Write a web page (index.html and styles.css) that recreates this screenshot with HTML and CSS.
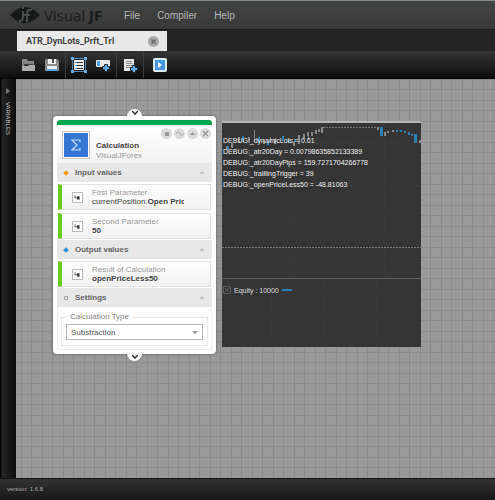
FILE: index.html
```html
<!DOCTYPE html>
<html lang="en">
<head>
<meta charset="utf-8">
<title>Visual JF</title>
<link rel="stylesheet" href="styles.css">
</head>
<body>
<header class="topbar">
  <a class="brand" href="#">
    <svg width="30" height="16" viewBox="0 0 30 16" aria-hidden="true"><path fill="#181a19" d="M0 8C5 3 10 0 15 0s10 3 15 8c-5 5-10 8-15 8S5 13 0 8z"/><path fill="none" stroke="#4b4d4c" stroke-width="2" d="M9 14c3 0 4-2 4-4V4M17 15V7c0-3 1-5 5-4M14 8h6"/><path fill="#4b4d4c" d="M12 0h2v2h-2z"/></svg>
    <span class="brand-name">Visual <b>JF</b></span>
  </a>
  <nav class="menu"><a href="#">File</a><a href="#">Compiler</a><a href="#">Help</a></nav>
</header>
<div class="tabs">
  <div class="tab"><span>ATR_DynLots_Prft_Trl</span>
    <button class="tab-close" aria-label="Close tab"><svg width="11" height="11" viewBox="0 0 11 11"><circle cx="5.500" cy="5.500" r="5.500" fill="#aaa"/><path stroke="#666" stroke-width="1.500" d="M3.500 3.500l4 4M7.500 3.500l-4 4"/></svg></button>
  </div>
</div>
<div class="toolbar">
  <div class="tools tools-file">
    <button aria-label="Open"><svg width="16" height="16" viewBox="0 0 16 16"><path fill="#858585" d="M2 2h5l1 2h6v4H5l-3 2z"/><path fill="#aaa" d="M2 9h6l1-1h6v6H2z"/><path stroke="#444" d="M4 7.500h9"/></svg></button>
    <button aria-label="Save"><svg width="16" height="16" viewBox="0 0 16 16"><path fill="#8b8b8b" d="M2 2h11l2 2v10H1V3z"/><path fill="#eee" d="M4 2h8v5H4zM3 9h10v5H3z"/><path fill="#555" d="M8 2h2v4H8z"/><path fill="#58a9e6" d="M3 12h10v2H3z"/></svg></button>
  </div>
  <div class="tools">
    <button aria-label="Select block"><svg width="16" height="16" viewBox="0 0 16 16"><path fill="none" stroke="#5587ae" d="M1.500 1.500h13v13h-13z"/><path fill="#71a9d8" d="M0 0h3v3H0zM13 0h3v3h-3zM0 13h3v3H0zM13 13h3v3h-3z"/><rect x="3" y="3" width="10" height="10" rx="1" fill="#eee"/><path stroke="#333" d="M6 5.500h6M6 8.500h6M6 11.500h6"/><path stroke="#4a9ad6" d="M4 5.500h2M4 8.500h2M4 11.500h2"/></svg></button>
    <button aria-label="Add variable"><svg width="16" height="16" viewBox="0 0 16 16"><rect x="1" y="3" width="14" height="7" rx="1" fill="#e8e8e8"/><path fill="#529fdc" d="M2 4h3v5H2z"/><path fill="#62b0ef" stroke="#222" d="M9.500 7.500h3v2h2v3h-2v2h-3v-2h-2v-3h2z"/></svg></button>
  </div>
  <div class="tools tools-single">
    <button aria-label="Add document"><svg width="16" height="16" viewBox="0 0 16 16"><path fill="#e5e5e5" d="M2 2h10v12H2z"/><path stroke="#888" d="M4 4.500h6M4 6.500h6M4 8.500h6M4 10.500h4"/><path fill="#62b0ef" stroke="#222" d="M10.500 8.500h3v2h2v3h-2v2h-3v-2h-2v-3h2z"/></svg></button>
  </div>
  <div class="tools tools-single">
    <button aria-label="Run"><svg width="16" height="16" viewBox="0 0 16 16"><rect x="2" y="2" width="12" height="12" rx="1" fill="#4396df" stroke="#dcebf7" stroke-width="2"/><path fill="#fff" d="M6 5l4 3-4 3z"/></svg></button>
  </div>
</div>
<main class="workspace">
  <aside class="sidebar"><button><svg width="4" height="6" viewBox="0 0 4 6" aria-hidden="true"><path fill="#777" d="M0 0l4 3-4 3z"/></svg><span>VARIABLES</span></button></aside>
  <div class="canvas">
    <article class="node">
      <button class="port port-top" aria-label="Input port"><svg width="6" height="4" viewBox="0 0 6 4"><path fill="none" stroke="#333" stroke-width="1.500" d="M0 0l3 3 3-3"/></svg></button>
      <header class="node-head">
        <svg class="sigma" width="28" height="28" viewBox="0 0 28 28" aria-hidden="true"><rect x=".5" y=".5" width="27" height="27" fill="#fff" stroke="#c4c4c4"/><rect x="2" y="2" width="24" height="24" fill="#3578d4"/><path fill="none" stroke="#c4dcfa" stroke-width="1.200" d="M18 11V9h-8l5 5-5 5h8v-2"/></svg>
        <div class="node-titles"><h2>Calculation</h2><p>VisualJForex</p></div>
        <div class="node-tools">
          <button aria-label="Stop"><svg viewBox="0 0 11 11"><path fill="#999" d="M4 4h4v4H4z"/></svg></button>
          <button aria-label="Link"><svg viewBox="0 0 11 11"><path fill="none" stroke="#aaa" d="M2 6c1-3 3-3 4 0s3 1 3-1"/></svg></button>
          <button aria-label="Collapse"><svg viewBox="0 0 11 11"><path fill="#999" d="M3 7l2.500-3L8 7z"/></svg></button>
          <button aria-label="Remove"><svg viewBox="0 0 11 11"><path stroke="#999" stroke-width="1.200" d="M3 3l5 5M8 3l-5 5"/></svg></button>
        </div>
      </header>
      <h3 class="section"><i class="dot dot-in"></i>Input values<i class="fold"></i></h3>
      <div class="params">
        <div class="param"><svg class="link" viewBox="0 0 11 11"><path fill="none" stroke="#333" d="M2.500 3v3h3"/><path fill="#333" d="M5 4h3v4H5z"/></svg><div><span>First Parameter</span><p>currentPosition.<b>Open Price</b></p></div></div>
        <div class="param"><svg class="link" viewBox="0 0 11 11"><path fill="none" stroke="#333" d="M2.500 3v3h3"/><path fill="#333" d="M5 4h3v4H5z"/></svg><div><span>Second Parameter</span><p><b>50</b></p></div></div>
      </div>
      <h3 class="section"><i class="dot dot-out"></i>Output values<i class="fold"></i></h3>
      <div class="params">
        <div class="param"><svg class="link" viewBox="0 0 11 11"><path fill="none" stroke="#333" d="M2.500 3v3h3"/><path fill="#333" d="M5 4h3v4H5z"/></svg><div><span>Result of Calculation</span><p><b>openPriceLess50</b></p></div></div>
      </div>
      <h3 class="section"><i class="dot dot-set"></i>Settings<i class="fold"></i></h3>
      <div class="settings">
        <fieldset><legend><label for="calc">Calculation Type</label></legend>
          <div class="select"><select id="calc"><option>Substraction</option></select></div>
        </fieldset>
      </div>
      <button class="port port-bottom" aria-label="Output port"><svg width="6" height="4" viewBox="0 0 6 4"><path fill="none" stroke="#333" stroke-width="1.500" d="M0 0l3 3 3-3"/></svg></button>
    </article>
    <section class="chart">
      <svg class="plot" viewBox="0 0 199 224" preserveAspectRatio="none" aria-hidden="true">
        <path stroke="#3f3f3f" stroke-dasharray="1 2" d="M72.500 0v155M162.500 0v155M0 20.500h199M0 62.500h199M0 97.500h199M0 139.500h199M23.500 158v66M49.500 158v66M76.500 158v66M102.500 158v66M128.500 158v66M154.500 158v66M180.500 158v66"/>
        <path stroke="#777" stroke-dasharray="2 1" d="M0 124.500h199M101 4.500h55"/>
        <path stroke="#5d5d5d" d="M0 155.500h199"/>
        <path stroke="#858585" d="M32.500 7v12M48.500 14v6M86.500 10v7"/>
        <path stroke="#888" stroke-width="2" d="M5 23v4M10 20v5M17 14v6M27 14v5M42 17v4M53 16v5M72 19v4M77 12v9M82 11v5M86 9v4M90 9v4M94 7v4M97 6v3M100 4v6M156 4v3M163 9v4M166 8v2M171 7v2M198 17v3"/>
        <path stroke="#2c7eb2" stroke-width="2" d="M6 23v3M21 13v6M37 14v6M46 18v4M61 13v5M67 17v3M73 16v3M175 7v2M179 7v2M183 8v2M187 9v3M190 11v2"/>
        <path stroke="#2c7eb2" stroke-width="3" d="M159.500 4v9M193.500 11v9"/>
      </svg>
      <div class="debug">
        <p>DEBUG:_dynamicLots = 0.01</p>
        <p>DEBUG:_atr20Day = 0.00798635852133389</p>
        <p>DEBUG:_atr20DayPips = 159.7271704266778</p>
        <p>DEBUG:_traillingTrigger = 39</p>
        <p>DEBUG:_openPriceLess50 = -48.81063</p>
      </div>
      <div class="equity"><svg width="8" height="8" viewBox="0 0 8 8" aria-hidden="true"><path fill="none" stroke="#5c5c5c" d="M.5.5h7v7h-7zM2 2l4 4M6 2L2 6"/></svg><span>Equity : 10000</span><i></i></div>
    </section>
  </div>
</main>
<footer class="status">version: 1.6.8</footer>
</body>
</html>
```

FILE: styles.css
```css
* { box-sizing: border-box; }
body {
  margin: 0;
  min-height: 100vh;
  display: flex;
  flex-direction: column;
  background: #242424;
  font-family: "Liberation Sans", Arial, sans-serif;
  font-size: 8px;
}
h2, h3, p { margin: 0; font-size: inherit; }
a { color: inherit; text-decoration: none; }
button { padding: 0; border: 0; background: none; font: inherit; color: inherit; }
svg { display: block; }

.topbar {
  height: 30px;
  display: flex;
  align-items: center;
  padding-left: 10px;
  background: linear-gradient(#434544, #373837);
  border-top: 1px solid #858886;
  border-bottom: 1px solid #191919;
}
.brand { display: flex; align-items: center; gap: 4px; width: 114px; color: #181a19; }
.brand-name { font: 15px "Open Sans", sans-serif; line-height: 20px; }
.menu { display: flex; gap: 17px; color: #b5b5b5; font-size: 10px; }

.tabs { padding: 1px 0 0 17px; background: #242424; }
.tab {
  width: 150px;
  height: 20px;
  display: flex;
  align-items: center;
  justify-content: space-between;
  padding: 0 8px 0 9px;
  background: #e8e8e8;
  color: #444;
  font-family: Roboto, sans-serif;
  font-size: 9px;
  font-weight: bold;
}

.toolbar {
  height: 28px;
  display: flex;
  background: linear-gradient(#363636, #0c0c0c);
  border-bottom: 1px solid #050505;
}
.tools {
  display: flex;
  align-items: center;
  gap: 8px;
  width: 51px;
  padding-left: 5px;
  border-left: 1px solid #3c3c3c;
}
.tools-file { width: 65px; padding-left: 20px; border: 0; }
.tools-single { width: 27px; }
.tools-single + .tools-single { padding-left: 8px; width: 32px; }

.workspace { flex: 1; display: flex; }
.sidebar { width: 16px; background: linear-gradient(90deg, #050505 1px, #242424 2px, #0c0c0c); }
.sidebar button {
  width: 100%;
  display: flex;
  flex-direction: column;
  align-items: center;
  gap: 8px;
  padding-top: 9px;
  color: #ccc;
  font-size: 6px;
}
.sidebar span { writing-mode: vertical-rl; line-height: 8px; }
.canvas {
  flex: 1;
  position: relative;
  min-height: 290px;
  background-color: #999;
  background-image:
    linear-gradient(90deg, #8c8c8c 1px, transparent 1px, transparent 10px, #8c8c8c 10px, #8c8c8c 11px, transparent 11px),
    linear-gradient(#8c8c8c 1px, transparent 1px, transparent 10px, #8c8c8c 10px, #8c8c8c 11px, transparent 11px);
  background-size: 21px 21px;
  background-position: 5px 0;
}

.node {
  position: absolute;
  left: 37px;
  top: 37px;
  width: 163px;
  padding: 4px;
  border-radius: 4px;
  background: #fff;
  box-shadow: 0 0 3px #555;
}
.port {
  position: absolute;
  left: 74px;
  width: 15px;
  height: 8px;
  display: flex;
  justify-content: center;
  align-items: center;
  background: #fff;
}
.port-top { top: -7px; border-radius: 8px 8px 0 0; }
.port-bottom { bottom: -7px; border-radius: 0 0 8px 8px; }
.node-head {
  height: 43px;
  display: flex;
  align-items: flex-start;
  border-top: 5px solid #04a64b;
  border-radius: 3px 3px 0 0;
  background: linear-gradient(#fff, #f3f3f3);
}
.sigma { margin: 6px 6px 0 5px; }
/* The round tools sit above the title, so the title may run beneath them. */
.node-titles { flex: 1; width: 0; padding-top: 16px; line-height: 10px; color: #999; white-space: nowrap; }
.node-titles h2 { color: #444; }
.node-tools { display: flex; gap: 2px; padding: 3px 1px 0 0; }
.node-tools button { width: 11px; height: 11px; border-radius: 50%; background: #dcdcdc; }

.section {
  height: 19px;
  display: flex;
  align-items: center;
  gap: 7px;
  padding: 0 7px;
  background: #e8e8e8;
  color: #666;
}
.dot { width: 4px; height: 4px; }
.dot-in { background: #f39a1c; transform: rotate(45deg); }
.dot-out { background: #2d95d2; transform: rotate(45deg); }
.dot-set { border: 1px solid #aaa; }
.fold {
  margin-left: auto;
  border: 3px solid transparent;
  border-top: 0;
  border-bottom-color: #c2c2c2;
}
.params {
  display: grid;
  grid-template-columns: minmax(0, 1fr);
  gap: 3px;
  padding: 2px 1px 1px;
}
.param {
  height: 26px;
  display: flex;
  align-items: center;
  gap: 9px;
  padding: 0 26px 0 10px;
  border: 1px solid #e2e2e2;
  border-left: 4px solid #6cc91e;
  background: linear-gradient(#fefefe, #f2f2f2);
  line-height: 9px;
  color: #999;
}
.param div { flex: 1; min-width: 0; overflow: hidden; white-space: nowrap; }
.param p { color: #444; }
.link { width: 11px; height: 11px; flex: none; border: 1px solid #bbb; background: #fff; }

.settings { padding: 5px 3px 3px; border: 1px solid #f2f2f2; border-top: 0; }
fieldset { margin: 0; padding: 2px 4px 5px; border: 1px solid #e8e8e8; min-width: 0; }
legend { padding: 0 4px; color: #888; line-height: 10px; }
.select { position: relative; }
.select::after {
  content: "";
  position: absolute;
  right: 5px;
  top: 7px;
  border: 3px solid transparent;
  border-top-color: #999;
  border-bottom: 0;
  pointer-events: none;
}
select {
  display: block;
  width: 100%;
  height: 16px;
  padding: 0 4px;
  appearance: none;
  border: 1px solid #bbb;
  border-radius: 0;
  background: #fff;
  font: inherit;
  color: #555;
}

.chart {
  position: absolute;
  left: 206px;
  top: 42px;
  width: 199px;
  height: 226px;
  border-top: 2px solid #b5b5b5;
  background: #353535;
  color: #ddd;
  font-size: 7px;
}
.plot { position: absolute; width: 100%; height: 100%; }
.debug { position: relative; padding: 12px 1px 0; height: 161px; line-height: 11px; color: #eee; white-space: nowrap; }
.equity { position: relative; display: flex; align-items: center; gap: 3px; padding-left: 1px; height: 12px; }
.equity i { width: 10px; height: 2px; background: #2c7eb2; }

.status {
  height: 22px;
  padding-left: 7px;
  border-top: 1px solid #111;
  background: linear-gradient(#333, #181818);
  color: #aaa;
  font-size: 6px;
  line-height: 21px;
}
```
